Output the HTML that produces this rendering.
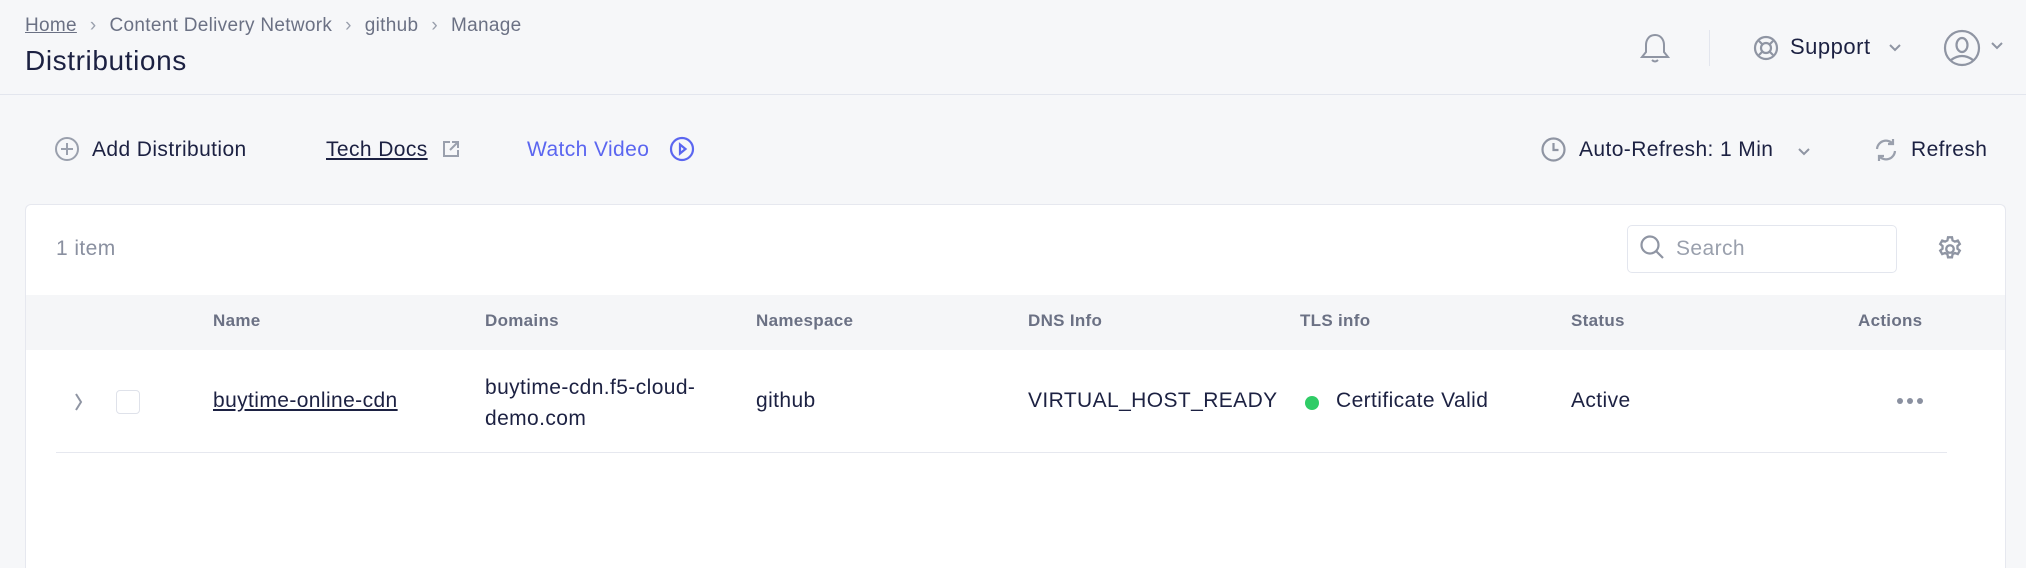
<!DOCTYPE html>
<html style="width:2026px;height:568px;overflow:hidden"><head><meta charset="utf-8"><style>
*{box-sizing:border-box;margin:0;padding:0}
body{width:2026px;height:568px;background:#f6f7f9;font-family:"Liberation Sans",sans-serif;color:#1c2142;position:relative;overflow:hidden}
.a{position:absolute;white-space:nowrap}
.t{font-size:21px;letter-spacing:0.4px}
.g{color:#6b7184}
svg{position:absolute;overflow:visible}
</style></head><body>
<div class="a g" style="left:25px;top:15px;font-size:19px;letter-spacing:0.3px"><span style="text-decoration:underline">Home</span><span style="margin:0 13px;color:#9aa0ad">›</span>Content Delivery Network<span style="margin:0 13px;color:#9aa0ad">›</span>github<span style="margin:0 13px;color:#9aa0ad">›</span>Manage</div>
<div class="a" style="left:25px;top:45px;font-size:28px;letter-spacing:0.6px">Distributions</div>
<div class="a" style="left:0;top:94px;width:2026px;border-top:1px solid #e3e6ee"></div>
<!-- header right -->
<svg style="left:1640px;top:32px" width="30" height="34" viewBox="0 0 30 34" fill="none" stroke="#8f95a3" stroke-width="2"><path d="M15 3c-6 0-9 5-9 10v7l-4 5h26l-4-5v-7c0-5-3-10-9-10z"/><path d="M12 28q3 3 6 0"/></svg>
<div class="a" style="left:1709px;top:30px;height:36px;border-left:1px solid #e3e6ee"></div>
<svg style="left:1753px;top:35px" width="26" height="26" viewBox="0 0 26 26" fill="none" stroke="#8f95a3" stroke-width="2.2"><circle cx="13" cy="13" r="11"/><circle cx="13" cy="13" r="5"/><path d="M6 6l3.5 3.5M20 6l-3.5 3.5M6 20l3.5-3.5M20 20l-3.5-3.5"/></svg>
<div class="a" style="left:1790px;top:34px;font-size:22px;letter-spacing:0.5px">Support</div>
<svg style="left:1889px;top:44px" width="12" height="8" fill="none" stroke="#8f95a3" stroke-width="2"><path d="M1 1l5 5 5-5"/></svg>
<svg style="left:1943px;top:29px" width="38" height="38" viewBox="0 0 38 38" fill="none" stroke="#8f95a3" stroke-width="2.2"><circle cx="19" cy="19" r="17"/><ellipse cx="19" cy="16" rx="5.5" ry="7"/><path d="M8 31q11-8 22 0"/></svg>
<svg style="left:1991px;top:42px" width="12" height="8" fill="none" stroke="#8f95a3" stroke-width="2"><path d="M1 1l5 5 5-5"/></svg>
<!-- toolbar -->
<svg style="left:55px;top:137px" width="24" height="24" viewBox="0 0 24 24" fill="none" stroke="#9aa0ad" stroke-width="2"><circle cx="12" cy="12" r="11"/><path d="M12 6v12M6 12h12"/></svg>
<div class="a t" style="left:92px;top:138px">Add Distribution</div>
<div class="a t" style="left:326px;top:138px;text-decoration:underline">Tech Docs</div>
<svg style="left:442px;top:140px" width="18" height="18" viewBox="0 0 18 18" fill="none" stroke="#9aa0ad" stroke-width="2"><path d="M8 2H2v14h14v-6M10 2h6v6M16 2l-8 8"/></svg>
<div class="a t" style="left:527px;top:138px;color:#5b66f0">Watch Video</div>
<svg style="left:670px;top:137px" width="24" height="24" viewBox="0 0 24 24" fill="none" stroke="#5b66f0" stroke-width="2.2"><circle cx="12" cy="12" r="11"/><path d="M10 7.5l5.5 4.5-5.5 4.5z"/></svg>
<svg style="left:1541px;top:137px" width="25" height="25" viewBox="0 0 25 25" fill="none" stroke="#8f95a3" stroke-width="2.2"><circle cx="12.5" cy="12.5" r="11"/><path d="M12.5 6v7h5"/></svg>
<div class="a t" style="left:1579px;top:138px">Auto-Refresh: 1 Min</div>
<svg style="left:1798px;top:148px" width="12" height="8" fill="none" stroke="#8f95a3" stroke-width="2"><path d="M1 1l5 5 5-5"/></svg>
<svg style="left:1874px;top:137px" width="24" height="26" viewBox="0 0 24 26" fill="none" stroke="#9aa0ad" stroke-width="2.2"><path d="M3 12a9 9 0 0 1 16-5M21 14a9 9 0 0 1-16 5M19 2v5h-5M5 24v-5h5"/></svg>
<div class="a t" style="left:1911px;top:138px">Refresh</div>
<!-- card -->
<div class="a" style="left:25px;top:204px;width:1981px;height:364px;background:#fff;border:1px solid #e6e8ef;border-bottom:none;border-radius:6px 6px 0 0"></div>
<div class="a t" style="left:56px;top:237px;color:#8a90a0">1 item</div>
<div class="a" style="left:1627px;top:225px;width:270px;height:48px;border:1px solid #e3e6ee;border-radius:5px;background:#fff"></div>
<svg style="left:1639px;top:234px" width="26" height="28" viewBox="0 0 26 28" fill="none" stroke="#8f95a3" stroke-width="2.2"><circle cx="11" cy="11" r="8.5"/><path d="M17 17l7 7"/></svg>
<div class="a t" style="left:1676px;top:237px;color:#9aa0ad">Search</div>
<svg style="left:1936px;top:235px" width="28" height="28" viewBox="0 0 24 24" fill="none" stroke="#8f95a3" stroke-width="2"><circle cx="12" cy="12" r="3.2"/><path d="M10.3 2h3.4l.5 2.6 2 1.1 2.5-.9 1.7 2.9-2 1.7v2.3l2 1.7-1.7 2.9-2.5-.9-2 1.1-.5 2.6h-3.4l-.5-2.6-2-1.1-2.5.9-1.7-2.9 2-1.7V9.4l-2-1.7 1.7-2.9 2.5.9 2-1.1z"/></svg>
<div class="a" style="left:26px;top:295px;width:1979px;height:55px;background:#f5f6f8"></div>
<div class="a g" style="top:311px;font-size:17px;font-weight:bold;left:0;width:2026px;letter-spacing:0.3px">
<span class="a" style="left:213px">Name</span><span class="a" style="left:485px">Domains</span><span class="a" style="left:756px">Namespace</span><span class="a" style="left:1028px">DNS Info</span><span class="a" style="left:1300px">TLS info</span><span class="a" style="left:1571px">Status</span><span class="a" style="left:1858px">Actions</span></div>
<svg style="left:74px;top:392px" width="10" height="20" fill="none" stroke="#8f95a3" stroke-width="2"><path d="M2 2l5 8-5 8"/></svg>
<div class="a" style="left:116px;top:390px;width:24px;height:24px;border:1px solid #dfe2ea;border-radius:4px"></div>
<div class="a t" style="left:213px;top:389px;text-decoration:underline">buytime-online-cdn</div>
<div class="a t" style="left:485px;top:372px;line-height:31px">buytime-cdn.f5-cloud-<br>demo.com</div>
<div class="a t" style="left:756px;top:389px">github</div>
<div class="a t" style="left:1028px;top:389px">VIRTUAL_HOST_READY</div>
<div class="a" style="left:1305px;top:396px;width:14px;height:14px;border-radius:50%;background:#2fcc66"></div>
<div class="a t" style="left:1336px;top:389px">Certificate Valid</div>
<div class="a t" style="left:1571px;top:389px">Active</div>
<div class="a" style="left:1897px;top:398px;width:26px;height:6px">
<span class="a" style="left:0;top:0;width:6px;height:6px;border-radius:50%;background:#8a90a0"></span>
<span class="a" style="left:10px;top:0;width:6px;height:6px;border-radius:50%;background:#8a90a0"></span>
<span class="a" style="left:20px;top:0;width:6px;height:6px;border-radius:50%;background:#8a90a0"></span></div>
<div class="a" style="left:56px;top:452px;width:1891px;border-top:1px solid #e6e8ef"></div>
</body></html>
